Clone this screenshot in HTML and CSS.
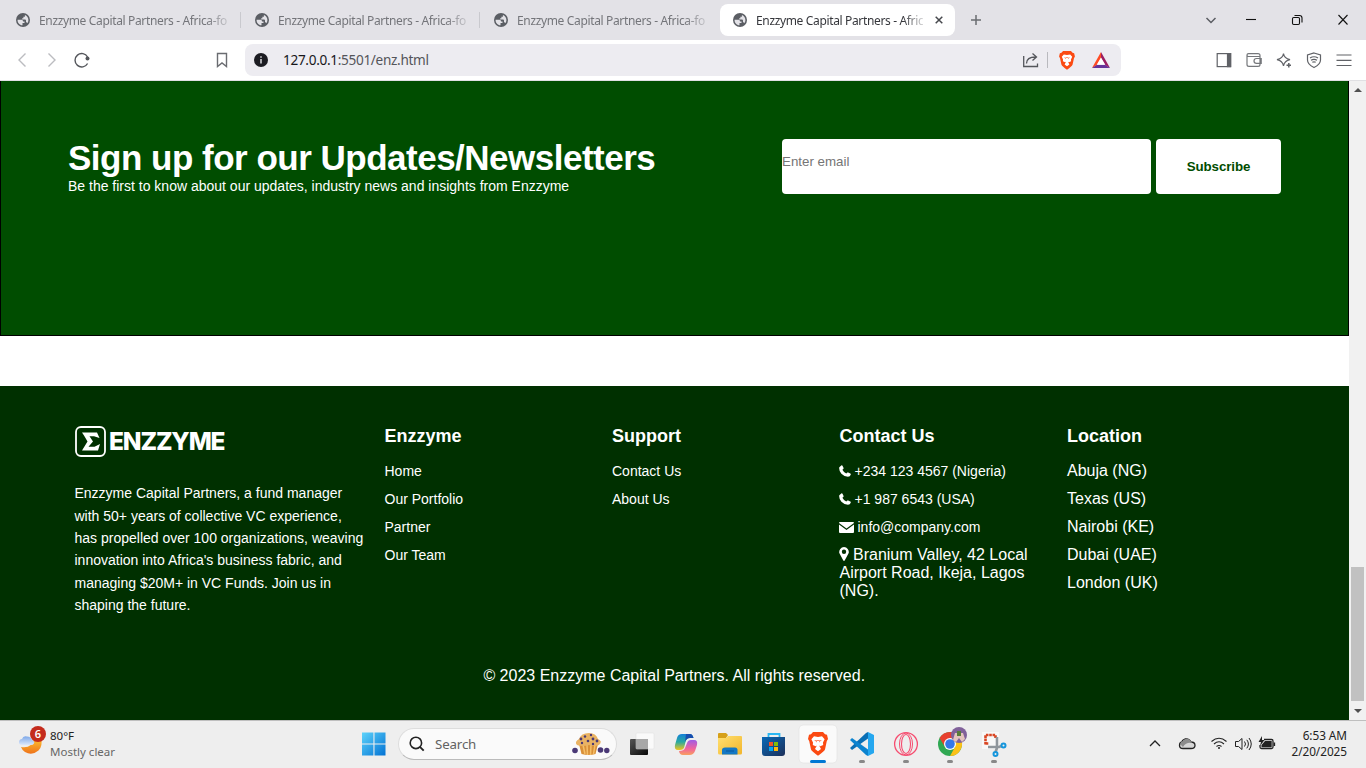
FILE: index.html
```html
<!DOCTYPE html>
<html lang="en">
<head>
<meta charset="utf-8">
<title>Enzzyme Capital Partners</title>
<link rel="stylesheet" href="styles.css">
</head>
<body>
<svg class="defs" width="0" height="0">
  <symbol id="globe" viewBox="0 0 14 14"><circle cx="7" cy="7" r="7" fill="#5b5e64"/><path d="M1.600 6.700H5.300C6.500 6.700 7 7.200 7 8.400H8.500V10H6.500V12.300C3.500 12.200 1.300 9.600 1.600 6.700ZM8.900 1.900C11.100 2.700 12.400 4.700 12.400 7 12.400 8.400 12 9.300 11.300 10.300 11 9.500 10.600 9.200 10 9.200V7.400C10 6.800 9.600 6.500 9 6.500H6.200V5.200H7.400V3.800H8.900Z" fill="#e3e2e7"/></symbol>
  <symbol id="brave" viewBox="0 0 20 24"><path d="M5 0H15L17 2.300 19 2.800 20 7 18.800 9 17 17.500Q16 19.500 10 23.800 4 19.500 3 17.500L1.200 9 0 7 1 2.800 3 2.300Z" fill="#fb4a12"/><path d="M6 4.300 10 5 14 4.300 16.600 7.300 15 10.600 15.200 13 12.300 14.300 10.600 13.200 11.300 9.800 14 8.300 11.500 8.600 10 8 8.500 8.600 6 8.300 8.700 9.800 9.400 13.200 7.700 14.300 4.800 13 5 10.600 3.400 7.300Z" fill="#fff"/><path d="M8.800 8.700H11.200L11.400 14 13 17 10 19.300 7 17 8.600 14Z" fill="#fff"/></symbol>
  <symbol id="phone" viewBox="0 0 12 12"><path d="M.3 2.200 2.600.3Q3.200 0 3.500.8L4.600 3Q4.700 3.500 4.300 3.900L3.400 4.700Q4.700 7.300 7.300 8.600L8.300 7.600Q8.700 7.300 9.200 7.500L11.300 8.500Q12 8.900 11.700 9.700 11.100 11.700 9 11.800 5.300 11.800 2.400 8.800-.3 5.500.3 2.200Z" fill="#fff"/></symbol>
</svg>

<header class="tabs">
  <div class="tab"><svg class="fav"><use href="#globe"/></svg><span>Enzzyme Capital Partners - Africa-fo</span></div>
  <div class="tab"><svg class="fav"><use href="#globe"/></svg><span>Enzzyme Capital Partners - Africa-fo</span></div>
  <div class="tab last"><svg class="fav"><use href="#globe"/></svg><span>Enzzyme Capital Partners - Africa-fo</span></div>
  <div class="tab active"><svg class="fav"><use href="#globe"/></svg><span>Enzzyme Capital Partners - Afric</span><svg class="close" viewBox="0 0 8 8"><path d="M.7.7 7.3 7.3M7.3.7.7 7.3" stroke="#46484d" stroke-width="1.500"/></svg></div>
  <svg class="plus" viewBox="0 0 12 12"><path d="M6 1V11M1 6H11" stroke="#6b6d72" stroke-width="1.500"/></svg>
  <svg class="winctl" viewBox="0 0 166 40"><g fill="none"><path d="M6.500 18 11 22.500 15.500 18" stroke="#5b5d62" stroke-width="1.500"/><g stroke="#111" stroke-width="1.100"><path d="M46 19.500H56"/><rect x="92.500" y="17.500" width="7" height="7" rx="1.200"/><path d="M94.500 15.500H99.500Q102 15.500 102 18V22.500M138.500 15 147.500 24.500M147.500 15 138.500 24.500"/></g></g></svg>
</header>

<nav class="toolbar">
  <svg class="navicons" viewBox="0 0 245 40"><g fill="none" stroke="#bbbcc0" stroke-width="1.400"><path d="M25.500 13.500 19 20 25.500 26.500M48.500 13.500 55 20 48.500 26.500"/><path d="M87.600 17A6.700 6.700 0 1 0 87.600 23.500" stroke="#54565b"/><path d="M217.500 13.500H226.500V26.500L222 23 217.500 26.500Z" stroke="#6a6c71"/></g><circle cx="87.500" cy="18.500" r="2" fill="#54565b"/></svg>
  <div class="address">
    <svg class="info" viewBox="0 0 14 14"><circle cx="7" cy="7" r="7" fill="#1c1c22"/><path d="M7 3.200V4.800M7 6V10.500" stroke="#dcdce0" stroke-width="1.500"/></svg>
    <span class="url"><b>127.0.0.1</b>:5501/enz.html</span>
    <svg class="share" viewBox="0 0 18 18"><path d="M1.700 5V15.500H15.500V12.500M4.500 12.500Q4.500 6 13.500 6M10.500 2.500 14.500 6 10.500 9.500" fill="none" stroke="#54565b" stroke-width="1.300"/></svg>
    <i class="divider"></i>
    <svg class="shield"><use href="#brave"/></svg>
    <svg class="bat" viewBox="0 0 18 16"><path d="M9 0 0 16 5 13 9 6Z" fill="#ff4b24"/><path d="M9 0 18 16 13 13 9 6Z" fill="#9b1f62"/><path d="M0 16H18L13 12.700H5Z" fill="#663399"/><path d="M9 5.500 13.300 12.800H4.700Z" fill="#fff"/></svg>
  </div>
  <svg class="actions" viewBox="0 0 150 40"><g fill="none" stroke="#606267" stroke-width="1.200"><rect x="1.200" y="13.600" width="13.400" height="13"/><rect x="11.500" y="13.600" width="3.100" height="13" fill="#606267"/><path d="M44 16.500H32.500Q31 16.500 31 15 31 13.600 32.500 13.600H42Q44 13.600 44 15.500V24.500Q44 26.400 42 26.400H33Q31 26.400 31 24.500V15M45.200 18.500H40.500Q38 18.500 38 21 38 23.300 40.500 23.300H45.200Z" stroke="#75777b"/><path d="M67.500 13.500Q68 18.200 74 19.700 68.500 20.700 67.500 26 66.500 20.700 61 19.700 67 18.200 67.500 13.500Z"/><path d="M72.800 23V27.500M70.500 25.200H75" stroke-width="1.500"/><path d="M98 13 104.500 15V20Q104.500 24.500 98 27.500 91.500 24.500 91.500 20V15Z"/><path d="M94 18Q98 15.500 102 18M95 20.300Q98 18.500 101 20.300M96.300 22.300Q98 21.400 99.700 22.300"/><path d="M120.500 15H135.500M120.500 20.300H135.500M120.500 25.500H135.500"/></g></svg>
</nav>

<div class="viewport">
  <main class="page">
    <section class="newsletter">
      <div class="pitch"><h1>Sign up for our Updates/Newsletters</h1><p>Be the first to know about our updates, industry news and insights from Enzzyme</p></div>
      <div class="form"><div class="field">Enter email</div><div class="subscribe">Subscribe</div></div>
    </section>
    <footer class="footer">
      <div class="columns">
        <div class="about">
          <div class="logo">
            <svg class="mark" viewBox="0 0 31 31"><rect x="1" y="1" width="29" height="29" rx="5" fill="none" stroke="#fff" stroke-width="1.800"/><path d="M7 6.500H22L24.500 12 19 10.200H14.500L18 15.500 13.500 20.800H19.500L25 18 23 24.500H7L12.500 15.500 9 9.500Z" fill="#fff"/></svg>
            <span>ENZZYME</span>
          </div>
          <p>Enzzyme Capital Partners, a fund manager<br>with 50+ years of collective VC experience,<br>has propelled over 100 organizations, weaving<br>innovation into Africa's business fabric, and<br>managing $20M+ in VC Funds. Join us in<br>shaping the future.</p>
        </div>
        <div class="col"><h2>Enzzyme</h2><ul><li>Home</li><li>Our Portfolio</li><li>Partner</li><li>Our Team</li></ul></div>
        <div class="col"><h2>Support</h2><ul><li>Contact Us</li><li>About Us</li></ul></div>
        <div class="col"><h2>Contact Us</h2><ul>
          <li><svg class="phone"><use href="#phone"/></svg>+234 123 4567 (Nigeria)</li>
          <li><svg class="phone"><use href="#phone"/></svg>+1 987 6543 (USA)</li>
          <li><svg class="mail" viewBox="0 0 15 11"><path d="M0 1Q0 0 1 0H14Q15 0 15 1L7.500 6.500ZM0 2.500 7.500 8 15 2.500V10Q15 11 14 11H1Q0 11 0 10Z" fill="#fff"/></svg>info@company.com</li>
          <li class="street"><svg class="pin" viewBox="0 0 10 14"><path d="M5 0A5 5 0 0 1 9.700 6L5.700 13.500Q5 14.300 4.300 13.500L.3 6A5 5 0 0 1 5 0ZM5 2.600A2.200 2.200 0 1 0 5 7 2.200 2.200 0 1 0 5 2.600Z" fill="#fff" fill-rule="evenodd"/></svg>Branium Valley, 42 Local<br>Airport Road, Ikeja, Lagos<br>(NG).</li>
        </ul></div>
        <div class="col"><h2>Location</h2><ul class="large"><li>Abuja (NG)</li><li>Texas (US)</li><li>Nairobi (KE)</li><li>Dubai (UAE)</li><li>London (UK)</li></ul></div>
      </div>
      <p class="copyright">© 2023 Enzzyme Capital Partners. All rights reserved.</p>
    </footer>
  </main>
  <aside class="scrollbar"><i class="up"></i><i class="thumb"></i><i class="down"></i></aside>
</div>

<div class="taskbar">
  <div class="weather">
    <svg viewBox="0 0 30 32"><defs><linearGradient id="moon" x2="0" y2="1"><stop stop-color="#ffc531"/><stop offset="1" stop-color="#ee731b"/></linearGradient><linearGradient id="cloud" x2="0" y2="1"><stop stop-color="#7ea8e9"/><stop offset="1" stop-color="#dce8fa"/></linearGradient></defs><path d="M3 21Q14 23 16 12L23 12Q25 20 20.500 24.500 14 30 7 26 4 24 3 21Z" fill="url(#moon)"/><path d="M4 19Q1 19 1 16.300 1 13.300 4 13 5 9.500 9 10.500 13 10.500 14 14 17 15 16 17.500 15 19 13 19Z" fill="url(#cloud)"/><circle cx="20" cy="8" r="8" fill="#c42b1c"/></svg><b class="badge">6</b>
    <div class="wtext"><span>80°F</span><span class="dim">Mostly clear</span></div>
  </div>
  <svg class="start" viewBox="0 0 24 24"><defs><linearGradient id="win" gradientUnits="userSpaceOnUse" x2="24" y2="24"><stop stop-color="#5ed4fb"/><stop offset="1" stop-color="#0070d3"/></linearGradient></defs><path d="M0 .5H11.400V11.500H0ZM12.500 .5H23.500V11.500H12.500ZM0 12.500H11.400V23.500H0ZM12.500 12.500H23.500V23.500H12.500Z" fill="url(#win)"/></svg>
  <div class="search">
    <svg class="lens" viewBox="0 0 16 16"><circle cx="6.900" cy="6.900" r="5.700" fill="none" stroke="#222" stroke-width="1.600"/><path d="M10.900 10.900 14.700 14.700" stroke="#222" stroke-width="1.900"/></svg><span>Search</span>
    <svg class="muffin" viewBox="0 0 38 24"><path d="M7 12 9.500 22Q17 24 23.500 22L26 12Z" fill="#d99038"/><path d="M11 13 13 22M15 13 15.500 23M19 13 18.500 23M23 13 21.500 22" stroke="#f5bf69" stroke-width="1.500"/><path d="M5 13Q2 10 7 7 9 1 17 1 24 1 26 7 31 9 27 13 22 15 17 13 10 15 5 13Z" fill="#eab363"/><g fill="#4a3976"><circle cx="9" cy="7" r="1.400"/><circle cx="13" cy="4.500" r="1.200"/><circle cx="19" cy="3" r="1.200"/><circle cx="21" cy="7" r="1.400"/><circle cx="16" cy="9" r="1.300"/><circle cx="25" cy="9" r="1.400"/><circle cx="10" cy="11" r="1.200"/><circle cx="21" cy="12" r="1.200"/><circle cx="3" cy="18.500" r="2.800"/><circle cx="28.500" cy="18" r="2.800"/><circle cx="34.800" cy="18.500" r="2.700"/></g></svg>
  </div>
  <div class="apps">
    <div class="app"><svg viewBox="0 0 44 48"><defs><linearGradient id="view" x2="1" y2="1"><stop stop-color="#555"/><stop offset="1" stop-color="#080808"/></linearGradient></defs><rect x="10" y="19" width="18" height="16" rx="1" fill="url(#view)"/><rect x="16" y="13" width="18" height="16" rx="1" fill="#fafafa" stroke="#ddd" stroke-width=".5"/><path d="M16 19H28V29H16Z" fill="#a8a8a8"/></svg></div>
    <div class="app"><svg viewBox="0 0 44 48"><defs><linearGradient id="cpA" x2="0" y2="1"><stop stop-color="#137fd8"/><stop offset=".5" stop-color="#29aaa0"/><stop offset="1" stop-color="#f3c51b"/></linearGradient><linearGradient id="cpB" x2="0" y2="1"><stop stop-color="#a05ce6"/><stop offset=".6" stop-color="#f2659b"/><stop offset="1" stop-color="#f8a05f"/></linearGradient></defs><path d="M18 14H26Q28.500 14 29.500 18H26Q22.500 18 21.500 22L20 28Q19 30 16 30H14Q10 30 11 25L13 18Q14 14 18 14Z" fill="url(#cpA)"/><path d="M27 20H30Q34 20 33 25L31 31Q29.500 35 25.500 35H19Q15.500 35 15 31 20 31 21 28L23 23Q24 20 27 20Z" fill="url(#cpB)"/><path d="M22 14H26Q28.500 14 29.500 18H26Q22.500 18 21 22Z" fill="#174eae"/></svg></div>
    <div class="app"><svg viewBox="0 0 44 48"><defs><linearGradient id="folder" x2="1" y2="1"><stop stop-color="#ffe071"/><stop offset="1" stop-color="#f2b52b"/></linearGradient></defs><path d="M10 14Q10 13 11 13H18L20 15 18 18H10Z" fill="#d6a019"/><path d="M10 18H18L20 16H33Q34 16 34 17V33Q34 34.500 32.500 34.500H11.500Q10 34.500 10 33Z" fill="url(#folder)"/><path d="M14 34.500V30Q14 27.500 17 27.500H27Q29.500 27.500 29.500 30V34.500Z" fill="#1478c4"/><path d="M18 31H26" stroke="#0b579c"/></svg></div>
    <div class="app"><svg viewBox="0 0 44 48"><defs><linearGradient id="store" x2="1" y2="1"><stop stop-color="#0869b8"/><stop offset="1" stop-color="#1d2f59"/></linearGradient></defs><path d="M16.500 18V14H27.500V18" fill="none" stroke="#29b7f3" stroke-width="1.800"/><path d="M10 17H33V33Q33 36 30 36H13Q10 36 10 33Z" fill="url(#store)"/><path d="M17 22H21V26H17Z" fill="#f35325"/><path d="M22 22H26V26H22Z" fill="#81bc06"/><path d="M17 27H21V31H17Z" fill="#05a6f0"/><path d="M22 27H26V31H22Z" fill="#ffba08"/></svg></div>
    <div class="app"><svg viewBox="0 0 44 48"><rect x="3" y="5" width="38" height="38" rx="4" fill="#fafafa" stroke="#e2e2e2" stroke-width=".7"/><use href="#brave" x="11.500" y="12" width="21" height="24"/><rect x="14" y="40" width="16" height="3" rx="1.500" fill="#0078d4"/></svg></div>
    <div class="app"><svg viewBox="0 0 44 48"><path d="M28 12 34 15V33L28 36Z" fill="#25a7ef"/><path d="M10 28 12 30 28 18.500V12L26 13Z" fill="#0a6fb5"/><path d="M10 20 12 18 28 29.500V36L26 35Z" fill="#0b83cf"/><rect x="19" y="40" width="6" height="3" rx="1.500" fill="#888"/></svg></div>
    <div class="app"><svg viewBox="0 0 44 48"><g fill="none" stroke="#f64d70"><circle cx="22" cy="24" r="11.400" stroke-width="1.300"/><ellipse cx="22" cy="24" rx="6.500" ry="11" stroke-width="1"/><ellipse cx="22" cy="24" rx="4.500" ry="9.500" stroke-width="1.100"/></g><rect x="19" y="40" width="6" height="3" rx="1.500" fill="#888"/></svg></div>
    <div class="app"><svg viewBox="0 0 44 48"><circle cx="22" cy="24" r="12" fill="#30a853"/><path d="M11.600 18A12 12 0 0 1 32.400 18H22L17 27Z" fill="#e8402f"/><path d="M22 18H32.400A12 12 0 0 1 22 36L27 27Z" fill="#fbc117"/><circle cx="22" cy="24" r="6" fill="#fff"/><circle cx="22" cy="24" r="4.800" fill="#3477ea"/><circle cx="31" cy="15" r="8" fill="#80619a"/><path d="M25 20 27 13H35L37 19 34 22 31 18 28 22Z" fill="#e4c4bd"/><rect x="29" y="11" width="4" height="5" fill="#587d39"/><rect x="19" y="40" width="6" height="3" rx="1.500" fill="#888"/></svg></div>
    <div class="app"><svg viewBox="0 0 44 48"><rect x="10" y="12" width="17" height="17" fill="#f8f8f8"/><path d="M13.500 24.500V15H23.500V18M13.500 23.500H17" fill="none" stroke="#d94623" stroke-width="2.600" stroke-dasharray="2.600 .7"/><path d="M25 17V28L23.500 32M16 27H27L29.500 26" fill="none" stroke="#8f969c" stroke-width="2.600"/><circle cx="31.500" cy="25.500" r="2" fill="none" stroke="#1696dc" stroke-width="2"/><circle cx="23.500" cy="34" r="2" fill="none" stroke="#1696dc" stroke-width="2"/><rect x="19" y="40" width="6" height="3" rx="1.500" fill="#888"/></svg></div>
  </div>
  <svg class="tray" viewBox="0 0 140 48"><g fill="none" stroke="#222" stroke-width="1.300"><path d="M10 26 15 21 20 26"/><path d="M43 28.500H51Q55 28.500 55 25.500 55 22 51 22 49 18 45 19 42 20 42 22 39.500 22.500 39.500 25.500 39.500 28.500 43 28.500Z" fill="#d6d6d6"/><path d="M40 24Q41 21 43 21 46 17 50 20L52 23Q46 22 43 27Z" fill="#8c8c8c" stroke="none"/><path d="M71.500 21.500Q79 15 86.500 21.500M74 24Q79 19.500 84 24M76.500 26.500Q79 24.500 81.500 26.500" stroke-width="1.100"/><circle cx="79" cy="28" r="1" fill="#222" stroke="none"/><path d="M95.500 21.500H98.500L102 18.500V29.500L98.500 26.500H95.500ZM104.500 21.500Q106.500 24 104.500 26.500M106.800 19.800Q110 24 106.800 28.300M109 18Q113.500 24 109 30" stroke-width="1"/><path d="M124 19.500H131.500Q133 19.500 133 21V27Q133 28.500 131.500 28.500H121.500Q120 28.500 120 27V25M134.500 22.500V26"/><path d="M125 21H131.700V27.200H121.500V25Z" fill="#222" stroke="none"/><path d="M122 16 118.500 22H121L120 26 124.500 20H122Z" fill="#222" stroke="none"/></g></svg>
  <div class="clock"><span>6:53 AM</span><span>2/20/2025</span></div>
</div>
</body>
</html>
```
FILE: styles.css
```css
* { box-sizing: border-box; margin: 0; padding: 0; }
body { width: 1366px; height: 768px; overflow: hidden; display: flex; flex-direction: column; background: #fff; font-family: "Liberation Sans", Arial, sans-serif; }
svg { display: block; flex: none; }
.defs { position: absolute; }

.tabs, .toolbar, .taskbar { font-family: "Noto Sans", sans-serif; display: flex; flex: none; }
.tabs { height: 40px; background: #e3e2e7; align-items: center; }
.tab { width: 239px; height: 32px; padding-left: 16px; display: flex; align-items: center; color: #74757a; font-size: 12px; letter-spacing: -.35px; flex: none; position: relative; }
.tab:not(.last):not(.active)::after { content: ""; position: absolute; right: -2px; top: 8px; width: 1px; height: 16px; background: #c9c9ce; }
.tab span { width: 190px; margin-left: 9px; white-space: nowrap; mask-image: linear-gradient(90deg, #000 88%, #0003 100%); }
.tab.active { width: 235px; margin-left: 3px; padding-left: 13px; border-radius: 8px; background: #fff; color: #36373c; }
.tab.active span { width: 167px; }
.fav { width: 14px; height: 14px; }
.close { width: 8px; height: 8px; margin-left: 12px; }
.plus { width: 12px; height: 12px; margin-left: 15px; }
.winctl { width: 166px; height: 40px; margin-left: auto; }

.toolbar { height: 41px; border-bottom: 1px solid #e0e0e3; }
.navicons { width: 245px; height: 40px; }
.address { width: 876px; height: 32px; margin-top: 4px; padding: 0 11px 0 9px; border-radius: 8px; background: #edecf1; display: flex; align-items: center; }
.info { width: 14px; height: 14px; }
.url { margin: -1px 0 0 15px; font-size: 13.6px; letter-spacing: -.32px; color: #54555a; }
.url b { font-weight: 400; color: #17171b; }
.share { width: 18px; height: 18px; margin-left: auto; }
.divider { width: 1px; height: 16px; margin: 0 11px 0 7px; background: #b9b9be; }
.shield { width: 16px; height: 19px; }
.bat { width: 18px; height: 16px; margin-left: 17px; }
.actions { width: 150px; height: 40px; margin-left: 95px; }

.viewport { height: 639px; flex: none; display: flex; }
.page { width: 1349px; display: flex; flex-direction: column; color: #fff; }
.newsletter { height: 255px; padding: 58px 67px 0; display: flex; justify-content: space-between; background: #004d00; border: solid #000; border-width: 0 1px 1px; }
.newsletter h1 { font-size: 35px; line-height: 38px; letter-spacing: -.5px; white-space: nowrap; }
.newsletter p { font-size: 14px; line-height: 16px; margin-top: 1px; }
.form { display: flex; gap: 5px; height: 55px; }
.field { width: 369px; background: #fff; border-radius: 4px; color: #757575; font-size: 13.33px; line-height: 45px; }
.subscribe { width: 125px; background: #fff; border-radius: 4px; color: #004d00; font-size: 13.33px; font-weight: 700; line-height: 55px; text-align: center; letter-spacing: -.08px; }
.footer { height: 334px; margin-top: 50px; padding: 40px 0 0 74.5px; background: #003000; }
.columns { display: flex; height: 241px; }
.about { width: 310px; }
.logo { display: flex; align-items: center; height: 31px; }
.mark { width: 31px; height: 31px; }
.logo span { margin-left: 3.500px; font: 800 24.5px/31px Inter, sans-serif; letter-spacing: -1.15px; }
.about p { margin-top: 25.2px; font-size: 14px; line-height: 22.4px; white-space: nowrap; }
.col { width: 227.5px; }
.col h2 { font-size: 18px; line-height: 20px; }
.col ul { list-style: none; margin-top: 16px; }
.col li { height: 18px; margin-bottom: 10px; font-size: 14px; line-height: 18px; white-space: nowrap; }
.col .large li, .col .street { font-size: 16px; }
.col svg { display: inline-block; }
.phone { width: 12px; height: 12px; margin: 0 4px 0 -1px; vertical-align: -1px; }
.mail { width: 15px; height: 11px; margin: 0 4px 0 -1px; vertical-align: -1px; }
.pin { width: 10px; height: 14px; margin: 0 4px 0 -.5px; vertical-align: -1px; }
.copyright { margin-left: -75px; text-align: center; font-size: 16px; line-height: 18px; }
.scrollbar { width: 17px; background: #f1f1f1; display: flex; flex-direction: column; align-items: center; }
.up, .down { width: 0; height: 0; border: 4px solid transparent; }
.up { margin-top: 3px; border-bottom-color: #505050; }
.thumb { width: 13px; height: 134px; margin-top: 475px; background: #c1c1c1; }
.down { margin-top: 8px; border-top-color: #505050; }

.taskbar { height: 48px; background: #eee; border-top: 1px solid #bfbfbf; align-items: flex-start; color: #222; }
.weather { width: 362px; padding: 5px 0 0 18px; display: flex; position: relative; }
.weather svg { width: 30px; height: 32px; }
.badge { position: absolute; left: 30px; top: 5px; width: 16px; text-align: center; color: #fff; font-size: 11px; line-height: 16px; font-weight: 600; }
.wtext, .clock { display: flex; flex-direction: column; font-size: 11.5px; line-height: 16px; letter-spacing: 0; }
.wtext { padding: 2px 0 0 2px; }
.dim { color: #666; }
.start { width: 24px; height: 24px; margin-top: 11px; }
.search { width: 219px; height: 32px; margin: 7px 0 0 12px; padding: 0 6px 0 10px; border: 1px solid #ddd; border-bottom-color: #bbb; border-radius: 16px; background: #fafafa; display: flex; align-items: center; font-size: 13.3px; color: #626262; }
.lens { width: 16px; height: 16px; }
.search span { margin-left: 10px; letter-spacing: -.15px; }
.muffin { width: 38px; height: 24px; margin-left: auto; }
.apps { display: flex; margin: -1px 0 0 3px; }
.app, .app svg { width: 44px; height: 48px; }
.tray { width: 140px; height: 48px; margin: -1px 0 0 124px; }
.clock { margin: 6px 19px 0 auto; text-align: right; font-size: 11.8px; letter-spacing: -.05px; }
```
